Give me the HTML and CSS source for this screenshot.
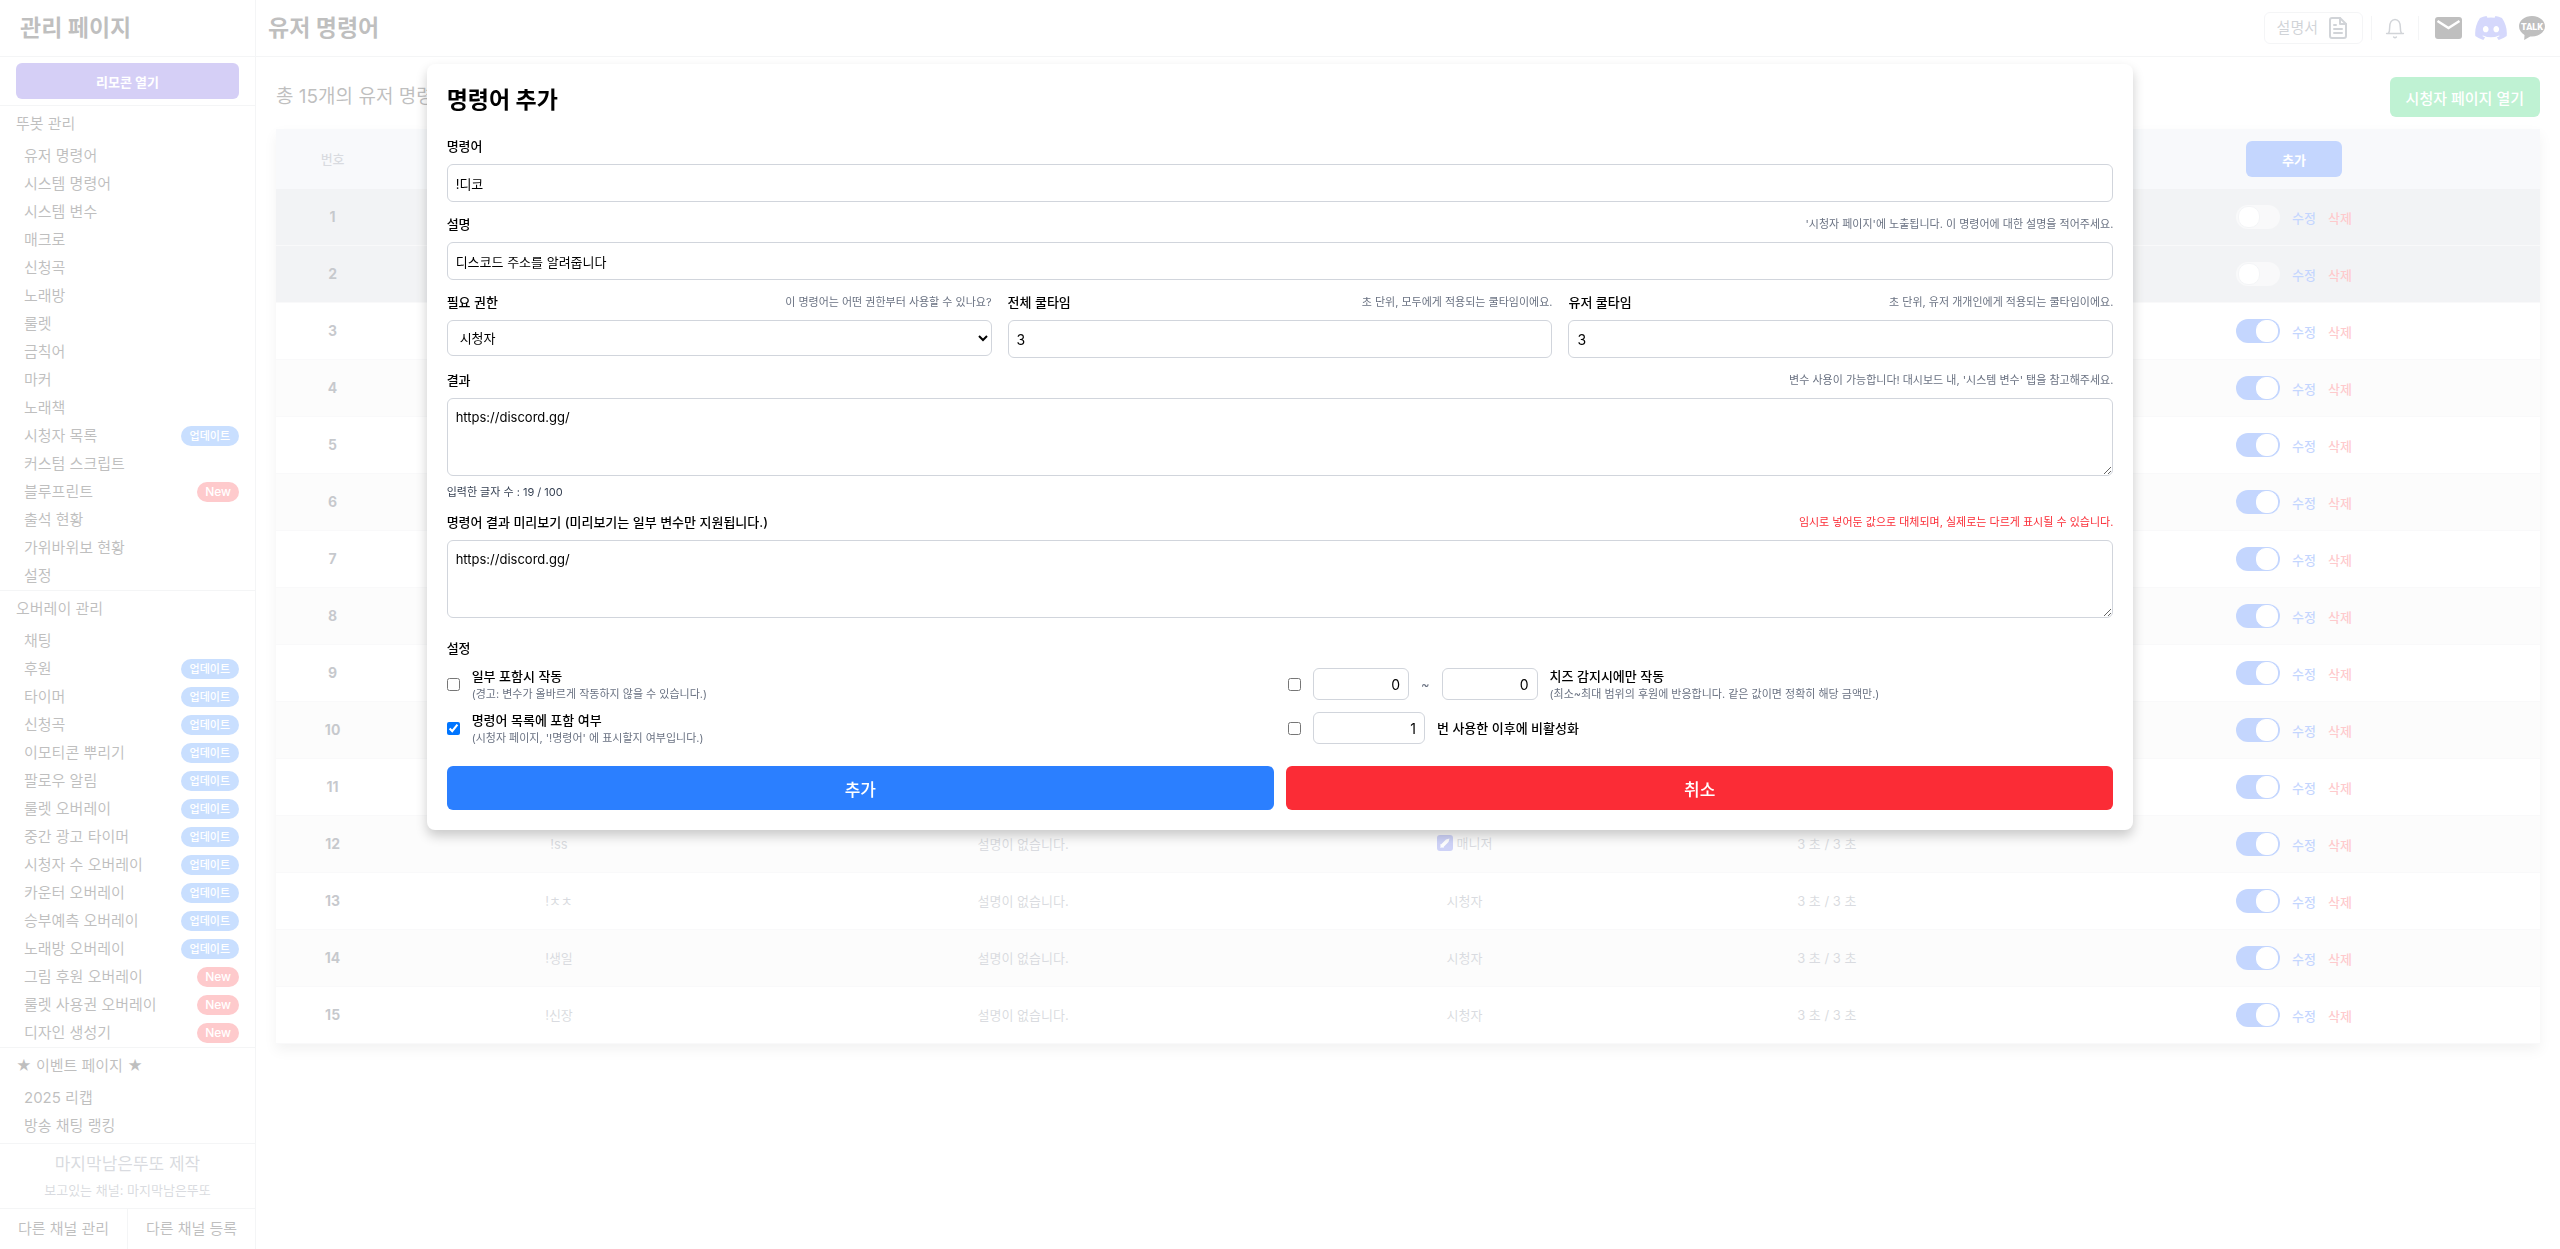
FILE: index.html
```html
<!DOCTYPE html>
<html lang="ko">
  <head>
    <meta charset="UTF-8" />
    <meta name="viewport" content="width=device-width, initial-scale=1.0" />
    <title>유저 명령어 - 관리 페이지</title>
    <link rel="stylesheet" href="styles.css">
  </head>
  <body>
    <div class="layout">
      <aside class="sidebar">
        <h2 class="sidebar-title">관리 페이지</h2>
        <div class="remote-box">
          <button type="button" class="remote-button">리모콘 열기</button>
        </div>
        <nav class="sidebar-nav">
          <section class="menu-group">
            <h3 class="menu-title">뚜봇 관리</h3>
            <a class="menu-item" href="#">유저 명령어</a>
            <a class="menu-item" href="#">시스템 명령어</a>
            <a class="menu-item" href="#">시스템 변수</a>
            <a class="menu-item" href="#">매크로</a>
            <a class="menu-item" href="#">신청곡</a>
            <a class="menu-item" href="#">노래방</a>
            <a class="menu-item" href="#">룰렛</a>
            <a class="menu-item" href="#">금칙어</a>
            <a class="menu-item" href="#">마커</a>
            <a class="menu-item" href="#">노래책</a>
            <a class="menu-item" href="#">시청자 목록 <span class="badge">업데이트</span></a>
            <a class="menu-item" href="#">커스텀 스크립트</a>
            <a class="menu-item" href="#">블루프린트 <span class="badge badge-new">New</span></a>
            <a class="menu-item" href="#">출석 현황</a>
            <a class="menu-item" href="#">가위바위보 현황</a>
            <a class="menu-item" href="#">설정</a>
          </section>
          <section class="menu-group">
            <h3 class="menu-title">오버레이 관리</h3>
            <a class="menu-item" href="#">채팅</a>
            <a class="menu-item" href="#">후원 <span class="badge">업데이트</span></a>
            <a class="menu-item" href="#">타이머 <span class="badge">업데이트</span></a>
            <a class="menu-item" href="#">신청곡 <span class="badge">업데이트</span></a>
            <a class="menu-item" href="#">이모티콘 뿌리기 <span class="badge">업데이트</span></a>
            <a class="menu-item" href="#">팔로우 알림 <span class="badge">업데이트</span></a>
            <a class="menu-item" href="#">룰렛 오버레이 <span class="badge">업데이트</span></a>
            <a class="menu-item" href="#">중간 광고 타이머 <span class="badge">업데이트</span></a>
            <a class="menu-item" href="#">시청자 수 오버레이 <span class="badge">업데이트</span></a>
            <a class="menu-item" href="#">카운터 오버레이 <span class="badge">업데이트</span></a>
            <a class="menu-item" href="#">승부예측 오버레이 <span class="badge">업데이트</span></a>
            <a class="menu-item" href="#">노래방 오버레이 <span class="badge">업데이트</span></a>
            <a class="menu-item" href="#">그림 후원 오버레이 <span class="badge badge-new">New</span></a>
            <a class="menu-item" href="#">룰렛 사용권 오버레이 <span class="badge badge-new">New</span></a>
            <a class="menu-item" href="#">디자인 생성기 <span class="badge badge-new">New</span></a>
          </section>
          <section class="menu-group">
            <h3 class="menu-title">★ 이벤트 페이지 ★</h3>
            <a class="menu-item" href="#">2025 리캡</a>
            <a class="menu-item" href="#">방송 채팅 랭킹</a>
          </section>
        </nav>
        <div class="sidebar-info">
          <p class="maker">마지막남은뚜또 제작</p>
          <p class="channel">보고있는 채널: 마지막남은뚜또</p>
        </div>
        <div class="sidebar-links">
          <a href="#">다른 채널 관리</a>
          <a href="#">다른 채널 등록</a>
        </div>
      </aside>

      <div class="page">
        <header class="topbar">
          <h1 class="page-title">유저 명령어</h1>
          <div class="topbar-tools">
            <a class="manual-link" href="#">
              설명서
              <svg width="24" height="24" viewBox="0 0 24 24" fill="none" stroke="currentColor" stroke-width="2" stroke-linejoin="round" stroke-linecap="round">
                <path d="M14 2H6a2 2 0 0 0-2 2v16a2 2 0 0 0 2 2h12a2 2 0 0 0 2-2V8z" />
                <path d="M14 2v6h6M8 9h2M8 13h8M8 17h8" />
              </svg>
            </a>
            <span class="divider"></span>
            <button type="button" class="icon-button bell" aria-label="알림">
              <svg width="24" height="24" viewBox="0 0 24 24" fill="none" stroke="currentColor" stroke-width="1.5" stroke-linejoin="round" stroke-linecap="round">
                <path d="M3.6 17.5h16.800M5.500 17.500c1.200-2 1.200-4 1.200-6.500 0-4 1.800-7.500 5.300-7.500s5.300 3.500 5.300 7.500c0 2.500 0 4.500 1.200 6.500" />
                <path d="M10.600 21c.8.800 2 .8 2.800 0" />
              </svg>
            </button>
            <span class="divider"></span>
            <div class="contact-links">
              <a class="icon-link" href="#" aria-label="메일">
                <svg width="28" height="24" viewBox="0 0 28 24">
                  <rect x="0" y="1" width="27" height="22" rx="3" fill="#000" />
                  <path d="M2.500 5l11 7 11-7" fill="none" stroke="#fff" stroke-width="2.500" />
                </svg>
              </a>
              <a class="icon-link" href="#" aria-label="디스코드">
                <svg width="32" height="24" viewBox="0 0 127.140 96.360" fill="#5865f2">
                  <path d="M107.700 8.070A105.150 105.150 0 0 0 81.470 0a72.060 72.060 0 0 0-3.360 6.830 97.680 97.680 0 0 0-29.110 0A72.370 72.370 0 0 0 45.640 0a105.890 105.890 0 0 0-26.250 8.090C2.790 32.650-1.710 56.600.54 80.210a105.730 105.730 0 0 0 32.170 16.150 77.700 77.700 0 0 0 6.890-11.110 68.420 68.420 0 0 1-10.850-5.180c.91-.66 1.800-1.340 2.660-2a75.570 75.570 0 0 0 64.320 0c.87.71 1.760 1.390 2.660 2a68.680 68.680 0 0 1-10.870 5.190 77 77 0 0 0 6.890 11.100 105.250 105.250 0 0 0 32.190-16.140c2.640-27.380-4.510-51.110-18.900-72.150zM42.450 65.690c-6.270 0-11.450-5.690-11.450-12.690s5-12.740 11.430-12.740S54 46 53.890 53s-5.050 12.690-11.440 12.690zm42.240 0c-6.280 0-11.440-5.690-11.440-12.690s5-12.740 11.440-12.740S96.230 46 96.120 53s-5.040 12.690-11.430 12.690z" />
                </svg>
              </a>
              <a class="icon-link" href="#" aria-label="카카오톡">
                <svg width="26" height="24" viewBox="0 0 26 24">
                  <path d="M13 0C5.800 0 0 4.600 0 10.300c0 3.700 2.200 6.700 5.500 8.600L5.200 24l6-3.600c.6.100 1.200.1 1.800.1 7.200 0 13-4.500 13-10.200S20.200 0 13 0z" fill="#000" />
                  <text class="talk-text" x="13" y="14" text-anchor="middle">TALK</text>
                </svg>
              </a>
            </div>
          </div>
        </header>

        <main class="content">
          <div class="content-head">
            <p class="summary">총 15개의 유저 명령어</p>
            <button type="button" class="viewer-button">시청자 페이지 열기</button>
          </div>
          <table class="command-table">
            <thead>
              <tr>
                <th class="col-no">번호</th>
                <th class="col-name"></th>
                <th class="col-desc"></th>
                <th class="col-role"></th>
                <th class="col-time"></th>
                <th class="col-action"><button type="button" class="add-button">추가</button></th>
              </tr>
            </thead>
            <tbody id="commandRows"></tbody>
          </table>
        </main>
      </div>
    </div>

    <div class="overlay">
      <form class="modal" role="dialog" aria-labelledby="modalTitle">
        <h2 class="modal-title" id="modalTitle">명령어 추가</h2>

        <div class="field">
          <div class="field-head">
            <label for="command">명령어</label>
          </div>
          <input type="text" id="command" class="input" value="!디코" />
        </div>

        <div class="field">
          <div class="field-head">
            <label for="description">설명</label>
            <span class="hint">'시청자 페이지'에 노출됩니다. 이 명령어에 대한 설명을 적어주세요.</span>
          </div>
          <input type="text" id="description" class="input" value="디스코드 주소를 알려줍니다" />
        </div>

        <div class="field-row">
          <div class="field">
            <div class="field-head">
              <label for="role">필요 권한</label>
              <span class="hint">이 명령어는 어떤 권한부터 사용할 수 있나요?</span>
            </div>
            <select id="role" class="input select">
              <option>시청자</option>
              <option>매니저</option>
            </select>
          </div>
          <div class="field">
            <div class="field-head">
              <label for="globalCooltime">전체 쿨타임</label>
              <span class="hint">초 단위, 모두에게 적용되는 쿨타임이에요.</span>
            </div>
            <input type="text" id="globalCooltime" class="input digits" value="3" />
          </div>
          <div class="field">
            <div class="field-head">
              <label for="userCooltime">유저 쿨타임</label>
              <span class="hint">초 단위, 유저 개개인에게 적용되는 쿨타임이에요.</span>
            </div>
            <input type="text" id="userCooltime" class="input digits" value="3" />
          </div>
        </div>

        <div class="field">
          <div class="field-head">
            <label for="result">결과</label>
            <span class="hint">변수 사용이 가능합니다! 대시보드 내, '시스템 변수' 탭을 참고해주세요.</span>
          </div>
          <textarea id="result" class="input textarea">https://discord.gg/</textarea>
          <p class="count">입력한 글자 수 : 19 / 100</p>
        </div>

        <div class="field">
          <div class="field-head">
            <label for="preview">명령어 결과 미리보기 (미리보기는 일부 변수만 지원됩니다.)</label>
            <span class="hint hint-warn">임시로 넣어둔 값으로 대체되며, 실제로는 다르게 표시될 수 있습니다.</span>
          </div>
          <textarea id="preview" class="input textarea" readonly>https://discord.gg/</textarea>
        </div>

        <fieldset class="settings">
          <legend>설정</legend>
          <div class="settings-grid">
            <div class="option">
              <input type="checkbox" id="partial" />
              <label for="partial">일부 포함시 작동
                <small>(경고: 변수가 올바르게 작동하지 않을 수 있습니다.)</small>
              </label>
            </div>
            <div class="option">
              <input type="checkbox" id="cheese" />
              <input type="text" class="input number digits" value="0" aria-label="최소 치즈" />
              <span class="tilde">~</span>
              <input type="text" class="input number digits" value="0" aria-label="최대 치즈" />
              <label for="cheese">치즈 감지시에만 작동
                <small>(최소~최대 범위의 후원에 반응합니다. 같은 값이면 정확히 해당 금액만.)</small>
              </label>
            </div>
            <div class="option">
              <input type="checkbox" id="listed" checked />
              <label for="listed">명령어 목록에 포함 여부
                <small>(시청자 페이지, '!명령어' 에 표시할지 여부입니다.)</small>
              </label>
            </div>
            <div class="option">
              <input type="checkbox" id="limit" />
              <input type="text" class="input number number-wide digits" value="1" aria-label="사용 횟수" />
              <label for="limit">번 사용한 이후에 비활성화</label>
            </div>
          </div>
        </fieldset>

        <div class="modal-buttons">
          <button type="submit" class="submit-button">추가</button>
          <button type="button" class="cancel-button">취소</button>
        </div>
      </form>
    </div>
    <script src="script.js"></script>
  </body>
</html>
```

FILE: styles.css
```css
* {
  box-sizing: border-box;
}
body {
  margin: 0;
  font-family: Inter, "Noto Sans CJK KR", sans-serif;
  font-size: 15px;
  line-height: 24px;
  color: #000;
  background: #fff;
}
h1,
h2,
h3,
p {
  margin: 0;
}
a {
  color: inherit;
  text-decoration: none;
}
button,
input,
select,
textarea {
  font-family: inherit;
}
button {
  border: none;
  padding: 0;
  color: #fff;
  border-radius: 6px;
  cursor: pointer;
}
svg {
  display: block;
}
.layout {
  display: flex;
  min-height: 100vh;
}

/* sidebar */
.sidebar {
  width: 256px;
  height: 100vh;
  flex-shrink: 0;
  display: flex;
  flex-direction: column;
  border-right: 1px solid #d1d5dc;
}
.sidebar-title,
.page-title {
  font-size: 23px;
  line-height: 32px;
  font-weight: 700;
}
.sidebar-title {
  padding: 12px 20px;
  border-bottom: 1px solid #d1d5dc;
}
.remote-box {
  padding: 6px 16px;
  border-bottom: 1px solid #d1d5dc;
}
.remote-button {
  display: block;
  width: 100%;
  height: 36px;
  background: #5840dc;
  font-size: 13px;
  font-weight: 700;
}
.sidebar-nav {
  flex: 1;
  overflow: hidden;
}
.menu-group + .menu-group {
  border-top: 1px solid #d1d5dc;
}
.menu-title {
  padding: 6px 16px;
  font-size: 15px;
  font-weight: 400;
}
.menu-item {
  display: flex;
  align-items: center;
  justify-content: space-between;
  height: 28px;
  padding: 0 16px 0 24px;
}
.badge {
  padding: 0 9px;
  border-radius: 10px;
  background: #2b7fff;
  color: #fff;
  font-size: 11px;
  font-weight: 500;
  line-height: 20px;
}
.badge-new {
  padding: 0 8px;
  background: #fb2c36;
  font-size: 12px;
}
.sidebar-info {
  padding: 4px 0 8px;
  text-align: center;
  color: #6a7282;
  border-top: 1px solid #d1d5dc;
}
.maker {
  font-size: 17px;
  line-height: 32px;
}
.channel {
  font-size: 13px;
  line-height: 20px;
}
.sidebar-links {
  display: flex;
  border-top: 1px solid #d1d5dc;
}
.sidebar-links a {
  flex: 1;
  line-height: 40px;
  text-align: center;
}
.sidebar-links a + a {
  border-left: 1px solid #d1d5dc;
}

/* top bar */
.page {
  flex: 1;
  min-width: 0;
}
.topbar {
  display: flex;
  align-items: center;
  justify-content: space-between;
  padding: 12px;
  border-bottom: 1px solid #d1d5dc;
}
.topbar-tools {
  display: flex;
  align-items: center;
  height: 32px;
}
.manual-link {
  display: flex;
  align-items: center;
  gap: 8px;
  height: 32px;
  padding: 0 12px;
  border: 1px solid #d1d5dc;
  border-radius: 6px;
  color: #4a5565;
}
.divider {
  width: 1px;
  height: 24px;
  margin: 0 8px;
  background: #d1d5dc;
}
.icon-button {
  width: 30px;
  display: flex;
  justify-content: center;
  background: none;
  color: #4a5565;
}
.contact-links {
  display: flex;
  gap: 12px;
  padding: 0 3px 0 8px;
}
.talk-text {
  font-family: Roboto, sans-serif;
  font-size: 9px;
  font-weight: 900;
  fill: #fff;
}

/* command list */
.content {
  padding: 20px;
}
.content-head {
  display: flex;
  align-items: center;
  justify-content: space-between;
  margin-bottom: 12px;
}
.summary {
  font-size: 19px;
}
.viewer-button {
  height: 40px;
  padding: 0 16px;
  background: #00c950;
  font-size: 15px;
  font-weight: 500;
}
.command-table {
  width: 100%;
  table-layout: fixed;
  border-collapse: separate;
  border-spacing: 0;
  font-size: 13px;
  text-align: center;
  color: #6a7282;
  box-shadow: 0 6px 12px rgba(0, 0, 0, 0.2);
}
.command-table th,
.command-table td {
  padding: 0;
}
.command-table th {
  height: 60px;
  background: #e2e8f0;
  font-weight: 500;
}
.command-table td {
  height: 57px;
  border-bottom: 1px solid #e5e7eb;
}
.command-table th:last-child,
.command-table td:last-child {
  padding-left: 6px;
}
.command-table tr:nth-child(even) td {
  background: #f1f1f1;
}
.command-table tr.off td {
  background: #ccd0d6;
}
.col-no {
  width: 5%;
}
.col-name {
  width: 15%;
}
.col-desc {
  width: 26%;
}
.col-role {
  width: 13%;
}
.col-time {
  width: 19%;
}
.col-action {
  width: 22%;
}
.command-table .no {
  font-size: 14px;
  font-weight: 700;
  color: #1e2939;
}
.add-button {
  width: 96px;
  height: 36px;
  background: #155dfc;
  font-size: 13px;
  font-weight: 700;
}
.role {
  display: inline-flex;
  align-items: center;
  gap: 4px;
}
.actions {
  display: flex;
  align-items: center;
  justify-content: center;
  gap: 12px;
}
.actions button {
  background: none;
  font-size: 13px;
  font-weight: 500;
}
.actions .edit {
  color: #155dfc;
}
.actions .delete {
  color: #fb2c36;
}
.switch {
  appearance: none;
  display: flex;
  align-items: center;
  width: 44px;
  height: 24px;
  margin: 0;
  padding: 2px;
  border-radius: 12px;
  background: #e5e7eb;
}
.switch::before {
  content: "";
  width: 20px;
  height: 20px;
  border: 1px solid #d1d5dc;
  border-radius: 10px;
  background: #fff;
}
.switch:checked {
  justify-content: flex-end;
  background: #155dfc;
}
.switch:checked::before {
  border-color: #fff;
}

/* modal */
.overlay {
  position: fixed;
  inset: 0;
  display: flex;
  justify-content: center;
  align-items: flex-start;
  padding-top: 64px;
  background: rgba(255, 255, 255, 0.75);
}
.modal {
  width: 66.667%;
  padding: 20px;
  display: flex;
  flex-direction: column;
  gap: 12px;
  border-radius: 8px;
  background: #fff;
  font-size: 13px;
  line-height: 20px;
  box-shadow: 0 6px 12px rgba(0, 0, 0, 0.2);
}
.modal-title {
  margin-bottom: 8px;
  font-size: 23px;
  line-height: 32px;
  font-weight: 700;
}
.field {
  display: flex;
  flex-direction: column;
  gap: 8px;
}
.field-row {
  display: grid;
  grid-template-columns: repeat(3, 1fr);
  gap: 16px;
}
.field-head {
  display: flex;
  align-items: center;
  justify-content: space-between;
}
.field-head label,
.option label,
.settings legend {
  font-weight: 500;
}
.hint {
  font-size: 11px;
  color: #6a7282;
}
.hint-warn {
  color: #fb2c36;
}
.input {
  width: 100%;
  height: 38px;
  padding: 8px;
  border: 1px solid #d1d5dc;
  border-radius: 6px;
  background: #fff;
  color: #000;
  font-size: 13px;
  line-height: 20px;
}
.digits {
  font-size: 14px;
}
.select {
  height: 36px;
}
.textarea {
  display: block;
  height: 78px;
}
.count {
  font-size: 11px;
  line-height: 16px;
  color: #364153;
}
.settings {
  margin: 8px 0 0;
  padding: 0;
  border: none;
}
.settings legend {
  padding: 0;
  margin-bottom: 8px;
}
.settings-grid {
  display: grid;
  grid-template-columns: 1fr 1fr;
  gap: 8px 16px;
}
.option {
  display: flex;
  align-items: center;
  gap: 12px;
  height: 36px;
}
.option input[type="checkbox"] {
  width: 13px;
  height: 13px;
  margin: 0;
}
.option small {
  display: block;
  font-size: 11px;
  line-height: 16px;
  font-weight: 400;
  color: #6a7282;
}
.number {
  width: 96px;
  height: 32px;
  text-align: right;
}
.number-wide {
  width: 112px;
}
.tilde {
  color: #6a7282;
}
.modal-buttons {
  display: grid;
  grid-template-columns: 1fr 1fr;
  gap: 12px;
  margin-top: 8px;
}
.modal-buttons button {
  height: 44px;
  font-size: 17px;
  font-weight: 500;
}
.submit-button {
  background: #2b7fff;
}
.cancel-button {
  background: #fb2c36;
}
```

FILE: script.js
```js
const commands = [
  { no: 1, on: false },
  { no: 2, on: false },
  { no: 3, on: true },
  { no: 4, on: true },
  { no: 5, on: true },
  { no: 6, on: true },
  { no: 7, on: true },
  { no: 8, on: true },
  { no: 9, on: true },
  { no: 10, on: true },
  { no: 11, on: true },
  { no: 12, on: true, name: "!ss", desc: "설명이 없습니다.", role: "매니저", time: "3 초 / 3 초" },
  { no: 13, on: true, name: "!ㅊㅊ", desc: "설명이 없습니다.", role: "시청자", time: "3 초 / 3 초" },
  { no: 14, on: true, name: "!생일", desc: "설명이 없습니다.", role: "시청자", time: "3 초 / 3 초" },
  { no: 15, on: true, name: "!신장", desc: "설명이 없습니다.", role: "시청자", time: "3 초 / 3 초" },
];

const managerIcon = `
  <svg width="16" height="16" viewBox="0 0 16 16">
    <rect width="16" height="16" rx="3" fill="#3c4ee0" />
    <path d="M12.500 3.500l-1 3.500-5 5-2.500-2.500 5-5z" fill="#fff" />
    <path d="M3.500 9.500l3 3M3.500 12.500l1.500-1.500" stroke="#fff" stroke-width="1.500" />
  </svg>`;

document.getElementById("commandRows").innerHTML = commands
  .map(
    ({ no, on, name = "", desc = "", role = "", time = "" }) => `
  <tr class="${on ? "" : "off"}">
    <td class="no">${no}</td>
    <td>${name}</td>
    <td>${desc}</td>
    <td><span class="role">${role === "매니저" ? managerIcon : ""}${role}</span></td>
    <td>${time}</td>
    <td>
      <div class="actions">
        <input type="checkbox" class="switch" aria-label="${no}번 명령어 사용" ${on ? "checked" : ""} />
        <button type="button" class="edit">수정</button>
        <button type="button" class="delete">삭제</button>
      </div>
    </td>
  </tr>`
  )
  .join("");
```
